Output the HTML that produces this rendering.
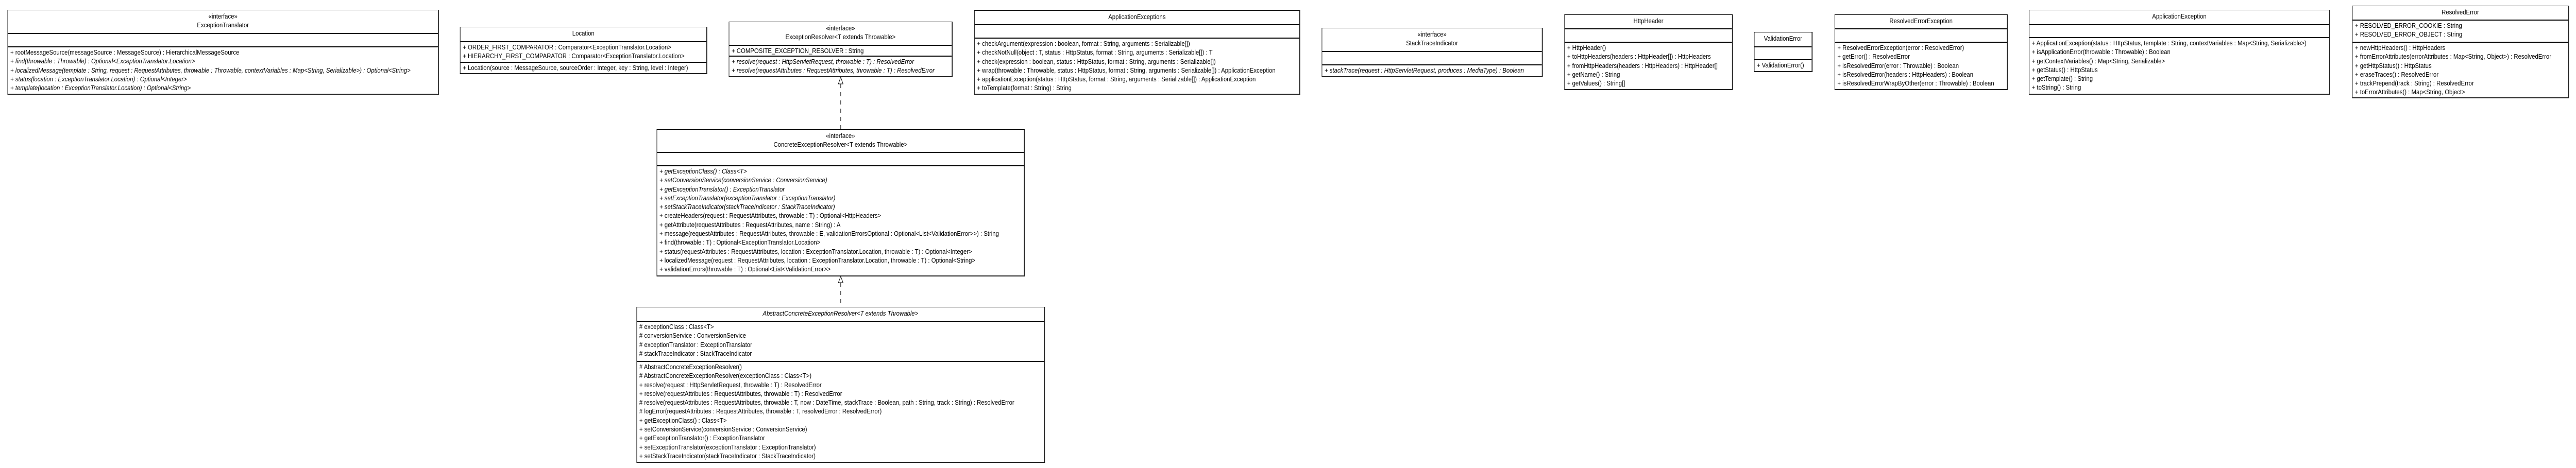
<!DOCTYPE html>
<html><head><meta charset="utf-8">
<style>
html{margin:0;overflow:hidden}
body{margin:0;background:#fff;overflow:hidden;font-family:"Liberation Sans",Arial,sans-serif;font-size:12.5px;color:#000}
#w{position:relative;width:5500px;height:909px;overflow:hidden;transform-origin:0 0}
.b{position:absolute;border:1px solid #000;border-right:2px solid #222;border-bottom:2px solid #222;box-sizing:border-box;background:#fff;overflow:hidden}
.s{box-sizing:border-box;border-top:2px solid #000;overflow:hidden}
.s:first-child{border-top:none}
.h{text-align:center;line-height:17.3px;padding-top:4px;white-space:nowrap}
.r{line-height:17.3px;padding:2px 0 0 5px;white-space:nowrap}
.r div{height:17.3px}
i{font-style:italic}
</style></head><body>
<div id="w">

<div class="b" style="left:16px;top:19px;width:921px;height:165px">
<div class="s h" style="height:44px"><div>«interface»</div><div>ExceptionTranslator</div></div>
<div class="s" style="height:26px"></div>
<div class="s r" style="height:93px">
<div>+ rootMessageSource(messageSource : MessageSource) : HierarchicalMessageSource</div>
<div><i>+ find(throwable : Throwable) : Optional&lt;ExceptionTranslator.Location&gt;</i></div>
<div><i>+ localizedMessage(template : String, request : RequestAttributes, throwable : Throwable, contextVariables : Map&lt;String, Serializable&gt;) : Optional&lt;String&gt;</i></div>
<div><i>+ status(location : ExceptionTranslator.Location) : Optional&lt;Integer&gt;</i></div>
<div><i>+ template(location : ExceptionTranslator.Location) : Optional&lt;String&gt;</i></div>
</div></div>

<div class="b" style="left:982px;top:52px;width:528px;height:92px">
<div class="s h" style="height:27px"><div>Location</div></div>
<div class="s r" style="height:40px">
<div>+ ORDER_FIRST_COMPARATOR : Comparator&lt;ExceptionTranslator.Location&gt;</div>
<div>+ HIERARCHY_FIRST_COMPARATOR : Comparator&lt;ExceptionTranslator.Location&gt;</div>
</div>
<div class="s r" style="height:21px"><div>+ Location(source : MessageSource, sourceOrder : Integer, key : String, level : Integer)</div></div>
</div>

<div class="b" style="left:1556px;top:42px;width:478px;height:108px">
<div class="s h" style="height:44px"><div>«interface»</div><div>ExceptionResolver&lt;T extends Throwable&gt;</div></div>
<div class="s r" style="height:21px"><div>+ COMPOSITE_EXCEPTION_RESOLVER : String</div></div>
<div class="s r" style="height:38px">
<div><i>+ resolve(request : HttpServletRequest, throwable : T) : ResolvedError</i></div>
<div><i>+ resolve(requestAttributes : RequestAttributes, throwable : T) : ResolvedError</i></div>
</div></div>

<div class="b" style="left:2080px;top:20px;width:696px;height:164px">
<div class="s h" style="height:26px"><div>ApplicationExceptions</div></div>
<div class="s" style="height:26px"></div>
<div class="s r" style="height:110px">
<div>+ checkArgument(expression : boolean, format : String, arguments : Serializable[])</div>
<div>+ checkNotNull(object : T, status : HttpStatus, format : String, arguments : Serializable[]) : T</div>
<div>+ check(expression : boolean, status : HttpStatus, format : String, arguments : Serializable[])</div>
<div>+ wrap(throwable : Throwable, status : HttpStatus, format : String, arguments : Serializable[]) : ApplicationException</div>
<div>+ applicationException(status : HttpStatus, format : String, arguments : Serializable[]) : ApplicationException</div>
<div>+ toTemplate(format : String) : String</div>
</div></div>

<div class="b" style="left:2822px;top:54px;width:472px;height:96px">
<div class="s h" style="height:44px"><div>«interface»</div><div>StackTraceIndicator</div></div>
<div class="s" style="height:26px"></div>
<div class="s r" style="height:24px"><div><i>+ stackTrace(request : HttpServletRequest, produces : MediaType) : Boolean</i></div></div>
</div>

<div class="b" style="left:3340px;top:28px;width:360px;height:147px">
<div class="s h" style="height:26px"><div>HttpHeader</div></div>
<div class="s" style="height:26px"></div>
<div class="s r" style="height:93px">
<div>+ HttpHeader()</div>
<div>+ toHttpHeaders(headers : HttpHeader[]) : HttpHeaders</div>
<div>+ fromHttpHeaders(headers : HttpHeaders) : HttpHeader[]</div>
<div>+ getName() : String</div>
<div>+ getValues() : String[]</div>
</div></div>

<div class="b" style="left:3745px;top:62px;width:125px;height:78px">
<div class="s h" style="height:27px"><div>ValidationError</div></div>
<div class="s" style="height:25px"></div>
<div class="s r" style="height:24px"><div>+ ValidationError()</div></div>
</div>

<div class="b" style="left:3917px;top:28px;width:370px;height:147px">
<div class="s h" style="height:26px"><div>ResolvedErrorException</div></div>
<div class="s" style="height:26px"></div>
<div class="s r" style="height:93px">
<div>+ ResolvedErrorException(error : ResolvedError)</div>
<div>+ getError() : ResolvedError</div>
<div>+ isResolvedError(error : Throwable) : Boolean</div>
<div>+ isResolvedError(headers : HttpHeaders) : Boolean</div>
<div>+ isResolvedErrorWrapByOther(error : Throwable) : Boolean</div>
</div></div>

<div class="b" style="left:4332px;top:19px;width:643px;height:165px">
<div class="s h" style="height:27px"><div>ApplicationException</div></div>
<div class="s" style="height:25px"></div>
<div class="s r" style="height:111px">
<div>+ ApplicationException(status : HttpStatus, template : String, contextVariables : Map&lt;String, Serializable&gt;)</div>
<div>+ isApplicationError(throwable : Throwable) : Boolean</div>
<div>+ getContextVariables() : Map&lt;String, Serializable&gt;</div>
<div>+ getStatus() : HttpStatus</div>
<div>+ getTemplate() : String</div>
<div>+ toString() : String</div>
</div></div>

<div class="b" style="left:5022px;top:11px;width:463px;height:180px">
<div class="s h" style="height:26px"><div>ResolvedError</div></div>
<div class="s r" style="height:43px">
<div>+ RESOLVED_ERROR_COOKIE : String</div>
<div>+ RESOLVED_ERROR_OBJECT : String</div>
</div>
<div class="s r" style="height:109px">
<div>+ newHttpHeaders() : HttpHeaders</div>
<div>+ fromErrorAttributes(errorAttributes : Map&lt;String, Object&gt;) : ResolvedError</div>
<div>+ getHttpStatus() : HttpStatus</div>
<div>+ eraseTraces() : ResolvedError</div>
<div>+ trackPrepend(track : String) : ResolvedError</div>
<div>+ toErrorAttributes() : Map&lt;String, Object&gt;</div>
</div></div>

<div class="b" style="left:1402px;top:251px;width:786px;height:286px">
<div class="s h" style="height:43px"><div>«interface»</div><div>ConcreteExceptionResolver&lt;T extends Throwable&gt;</div></div>
<div class="s" style="height:26px"></div>
<div class="s r" style="height:215px">
<div><i>+ getExceptionClass() : Class&lt;T&gt;</i></div>
<div><i>+ setConversionService(conversionService : ConversionService)</i></div>
<div><i>+ getExceptionTranslator() : ExceptionTranslator</i></div>
<div><i>+ setExceptionTranslator(exceptionTranslator : ExceptionTranslator)</i></div>
<div><i>+ setStackTraceIndicator(stackTraceIndicator : StackTraceIndicator)</i></div>
<div>+ createHeaders(request : RequestAttributes, throwable : T) : Optional&lt;HttpHeaders&gt;</div>
<div>+ getAttribute(requestAttributes : RequestAttributes, name : String) : A</div>
<div>+ message(requestAttributes : RequestAttributes, throwable : E, validationErrorsOptional : Optional&lt;List&lt;ValidationError&gt;&gt;) : String</div>
<div>+ find(throwable : T) : Optional&lt;ExceptionTranslator.Location&gt;</div>
<div>+ status(requestAttributes : RequestAttributes, location : ExceptionTranslator.Location, throwable : T) : Optional&lt;Integer&gt;</div>
<div>+ localizedMessage(request : RequestAttributes, location : ExceptionTranslator.Location, throwable : T) : Optional&lt;String&gt;</div>
<div>+ validationErrors(throwable : T) : Optional&lt;List&lt;ValidationError&gt;&gt;</div>
</div></div>

<div class="b" style="left:1359px;top:596px;width:872px;height:303px">
<div class="s h" style="height:26px"><div><i>AbstractConcreteExceptionResolver&lt;T extends Throwable&gt;</i></div></div>
<div class="s r" style="height:78px">
<div># exceptionClass : Class&lt;T&gt;</div>
<div># conversionService : ConversionService</div>
<div># exceptionTranslator : ExceptionTranslator</div>
<div># stackTraceIndicator : StackTraceIndicator</div>
</div>
<div class="s r" style="height:196px">
<div># AbstractConcreteExceptionResolver()</div>
<div># AbstractConcreteExceptionResolver(exceptionClass : Class&lt;T&gt;)</div>
<div>+ resolve(request : HttpServletRequest, throwable : T) : ResolvedError</div>
<div>+ resolve(requestAttributes : RequestAttributes, throwable : T) : ResolvedError</div>
<div># resolve(requestAttributes : RequestAttributes, throwable : T, now : DateTime, stackTrace : Boolean, path : String, track : String) : ResolvedError</div>
<div># logError(requestAttributes : RequestAttributes, throwable : T, resolvedError : ResolvedError)</div>
<div>+ getExceptionClass() : Class&lt;T&gt;</div>
<div>+ setConversionService(conversionService : ConversionService)</div>
<div>+ getExceptionTranslator() : ExceptionTranslator</div>
<div>+ setExceptionTranslator(exceptionTranslator : ExceptionTranslator)</div>
<div>+ setStackTraceIndicator(stackTraceIndicator : StackTraceIndicator)</div>
</div></div>

<svg width="5500" height="909" style="position:absolute;left:0;top:0" xmlns="http://www.w3.org/2000/svg">
<g stroke="#000" stroke-width="1" fill="#fff">
<line x1="1795" y1="163" x2="1795" y2="251" stroke-dasharray="8,8"/>
<polygon points="1795,150 1790,163 1800,163"/>
<line x1="1795" y1="549" x2="1795" y2="596" stroke-dasharray="8,8"/>
<polygon points="1795,537 1790,549 1800,549"/>
</g></svg>
</div>
<script>
(function(){var w=window.innerWidth||document.documentElement.clientWidth;if(w&&w<5500){document.getElementById('w').style.transform='scaleX('+(w/5500)+')';}})();
</script>
</body></html>
